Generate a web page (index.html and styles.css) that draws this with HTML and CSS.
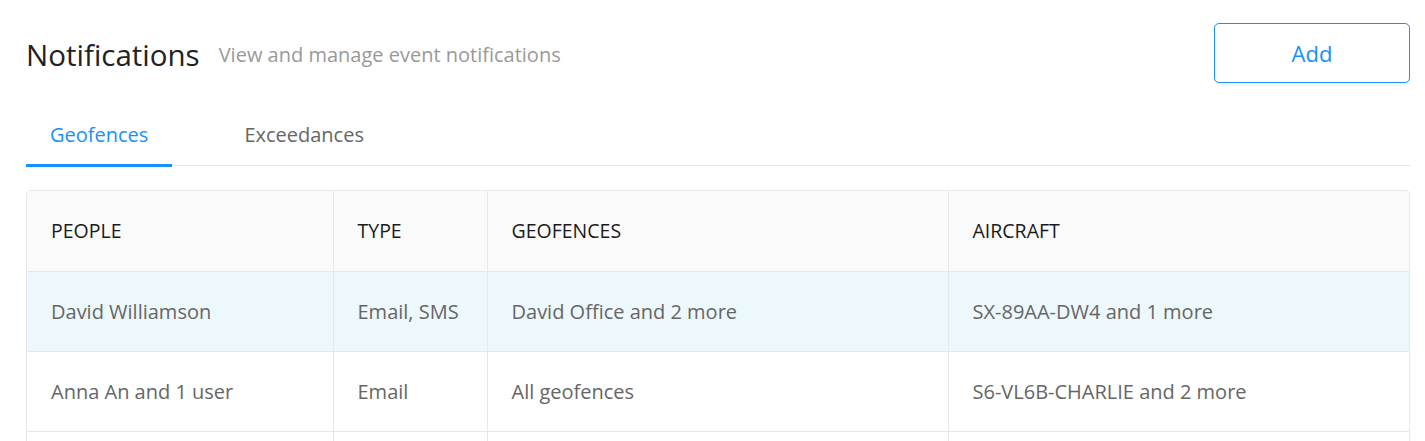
FILE: index.html
```html
<!DOCTYPE html>
<html lang="en">
<head>
    <meta charset="UTF-8">
    <meta name="viewport" content="width=device-width, initial-scale=1.0">
    <title>Notifications</title>
    <link rel="stylesheet" href="styles.css">
</head>
<body>

    <div class="page">
        <div class="page-header">
            <div class="heading">
                <h1>Notifications</h1>
                <span class="subtitle">View and manage event notifications</span>
            </div>
            <button class="add-btn">Add</button>
        </div>

        <div class="tabs">
            <div class="tab active">Geofences</div>
            <div class="tab">Exceedances</div>
        </div>

        <div class="table-wrap">
            <table class="notif-table">
                <colgroup>
                    <col class="col-people">
                    <col class="col-type">
                    <col class="col-geo">
                    <col>
                </colgroup>
                <thead>
                    <tr>
                        <th>PEOPLE</th>
                        <th>TYPE</th>
                        <th>GEOFENCES</th>
                        <th>AIRCRAFT</th>
                    </tr>
                </thead>
                <tbody>
                    <tr class="selected">
                        <td>David Williamson</td>
                        <td>Email, SMS</td>
                        <td>David Office and 2 more</td>
                        <td>SX-89AA-DW4 and 1 more</td>
                    </tr>
                    <tr>
                        <td>Anna An and 1 user</td>
                        <td>Email</td>
                        <td>All geofences</td>
                        <td>S6-VL6B-CHARLIE and 2 more</td>
                    </tr>
                    <tr>
                        <td>&nbsp;</td>
                        <td>&nbsp;</td>
                        <td>&nbsp;</td>
                        <td>&nbsp;</td>
                    </tr>
                </tbody>
            </table>
        </div>
    </div>

</body>
</html>
```

FILE: styles.css
```css
body, html {
    margin: 0;
    padding: 0;
    background: #fff;
    font-family: "Open Sans", "Noto Sans", Arial, sans-serif;
    overflow: hidden;
}

.page {
    padding: 23px 15px 0 26px;
}

/* Header */
.page-header {
    display: flex;
    justify-content: space-between;
    align-items: center;
}

.heading {
    display: flex;
    align-items: center;
    gap: 19px;
    margin-top: 2px;
}

h1 {
    margin: 0;
    font-size: 29.5px;
    font-weight: 400;
    color: #222;
}

.subtitle {
    font-size: 20px;
    color: #999;
}

.add-btn {
    width: 196px;
    height: 60px;
    background: #fff;
    color: #1890ff;
    border: 1px solid #1890ff;
    border-radius: 5px;
    font-family: inherit;
    font-size: 22px;
    cursor: pointer;
    box-shadow: 0 3px 0 rgba(0, 0, 0, 0.03);
}

/* Tabs */
.tabs {
    display: flex;
    margin-top: 22px;
    border-bottom: 1px solid #e8e8e8;
}

.tab {
    padding: 16px 24px;
    margin-right: 48px;
    font-size: 20px;
    color: #666;
    border-bottom: 3px solid transparent;
    margin-bottom: -2px;
    cursor: pointer;
}

.tab.active {
    color: #1890ff;
    border-bottom-color: #1890ff;
}

/* Table */
.table-wrap {
    margin-top: 24px;
    border: 1px solid #e8e8e8;
    border-bottom: none;
    border-radius: 5px 5px 0 0;
    overflow: hidden;
}

.notif-table {
    width: 100%;
    border-collapse: collapse;
    table-layout: fixed;
}

.col-people { width: 306px; }
.col-type { width: 154px; }
.col-geo { width: 461px; }

.notif-table th,
.notif-table td {
    height: 80px;
    padding: 0 24px;
    text-align: left;
    border-right: 1px solid #e8e8e8;
    border-bottom: 1px solid #e8e8e8;
    white-space: nowrap;
    box-sizing: border-box;
}

.notif-table th:last-child,
.notif-table td:last-child {
    border-right: none;
}

.notif-table th {
    background: #fafafa;
    font-size: 19.5px;
    font-weight: 500;
    color: #1a1a1a;
}

.notif-table td {
    font-size: 20px;
    color: #666;
}

.notif-table tr.selected td {
    background: #edf8fd;
}
```
